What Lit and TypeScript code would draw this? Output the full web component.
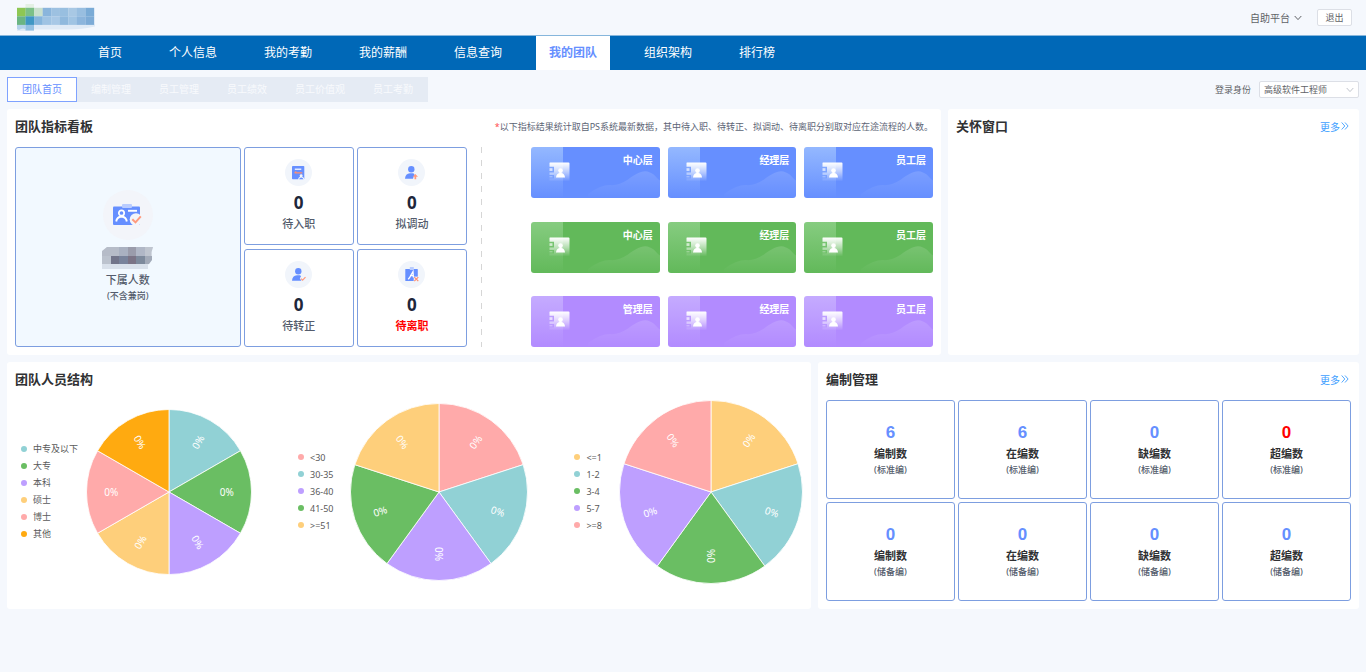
import { LitElement, html, css, svg, nothing } from "lit";
import { customElement, property } from "lit/decorators.js";
import { classMap } from "lit/directives/class-map.js";

const COLORS = {
  teal: "#91d1d5",
  green: "#6abe63",
  purple: "#be9fff",
  yellow: "#fecf7b",
  pink: "#ffaaaa",
  orange: "#ffaa10",
};

interface Slice {
  label: string;
  color: string;
}

interface Chart {
  name: string;
  size: number;
  tight: boolean;
  bottomUp: boolean;
  slices: Slice[];
}

const NAV = ["首页", "个人信息", "我的考勤", "我的薪酬", "信息查询", "我的团队", "组织架构", "排行榜"];
const TABS = ["团队首页", "编制管理", "员工管理", "员工绩效", "员工价值观", "员工考勤"];

const LEVELS = [
  { tone: "blue", names: ["中心层", "经理层", "员工层"] },
  { tone: "green", names: ["中心层", "经理层", "员工层"] },
  { tone: "purple", names: ["管理层", "经理层", "员工层"] },
];

const CHARTS: Chart[] = [
  {
    name: "学历",
    size: 166,
    tight: true,
    bottomUp: false,
    slices: [
      { label: "中专及以下", color: COLORS.teal },
      { label: "大专", color: COLORS.green },
      { label: "本科", color: COLORS.purple },
      { label: "硕士", color: COLORS.yellow },
      { label: "博士", color: COLORS.pink },
      { label: "其他", color: COLORS.orange },
    ],
  },
  {
    name: "年龄",
    size: 178,
    tight: false,
    bottomUp: false,
    slices: [
      { label: "<30", color: COLORS.pink },
      { label: "30-35", color: COLORS.teal },
      { label: "36-40", color: COLORS.purple },
      { label: "41-50", color: COLORS.green },
      { label: ">=51", color: COLORS.yellow },
    ],
  },
  {
    name: "司龄",
    size: 184,
    tight: false,
    bottomUp: true,
    slices: [
      { label: "<=1", color: COLORS.yellow },
      { label: "1-2", color: COLORS.teal },
      { label: "3-4", color: COLORS.green },
      { label: "5-7", color: COLORS.purple },
      { label: ">=8", color: COLORS.pink },
    ],
  },
];

const QUOTAS = [
  { value: 6, label: "编制数", note: "(标准编)" },
  { value: 6, label: "在编数", note: "(标准编)" },
  { value: 0, label: "缺编数", note: "(标准编)" },
  { value: 0, label: "超编数", note: "(标准编)", alert: true },
  { value: 0, label: "编制数", note: "(储备编)" },
  { value: 0, label: "在编数", note: "(储备编)" },
  { value: 0, label: "缺编数", note: "(储备编)" },
  { value: 0, label: "超编数", note: "(储备编)" },
];

const LOGO = [
  ["#8ec753", "#7cc088", "#c9e0cd", "#8ab5dc", "#9dc1e1", "#98bfe0", "#a8c8e4", "#98bee0", "#7aabd6"],
  ["#6bb583", "#3f97c4", "#86b5dc", "#9fc3e3", "#a8c8e6", "#90b9dd", "#a0c4e3", "#8cb5dc", "#7dabd6"],
];

const logo = html`<svg class="logo" width="82" height="27" viewBox="0 0 82 27" role="img" aria-label="logo">
  <rect x="8.5" y="0" width="8.5" height="4" fill="#e3f0e4" />
  <path d="M0 20.500H78v2Q66 25.500 50 25.500H17V27H0z" fill="#dfeaf6" />
  <path d="M0 20.500H8.500V25Q5 23.500 2 26L0 25z" fill="#b3d2ea" />
  <rect x="8.500" y="20.500" width="8.500" height="6" fill="#93c0e2" />
  ${LOGO.map((row, y) =>
    row.map((c, x) => svg`<rect x=${x * 8.56} y=${3.8 + y * 8.5} width="8.700" height="8.600" fill=${c} />`)
  )}
</svg>`;

const chevron = html`<svg class="chevron" width="8" height="6" viewBox="0 0 8 6" aria-hidden="true">
  <path d="M.7 1L4 4.600 7.300 1" fill="none" stroke="currentColor" />
</svg>`;

const moreLink = html`<a class="more" href="#">更多<svg width="8" height="8" viewBox="0 0 8 8" aria-hidden="true">
    <path d="M.7.5L3.800 4 .7 7.500M4 .5L7.100 4 4 7.500" fill="none" stroke="currentColor" stroke-width=".9" />
  </svg></a>`;

const badgeIcon = html`<svg width="29" height="22" viewBox="0 0 29 22" aria-hidden="true">
  <rect x="0" y="2.500" width="27" height="18.500" rx="1" fill="#668fff" />
  <rect x="9" y="0" width="10" height="4" rx="1" fill="#b9ccff" />
  <circle cx="8.500" cy="9" r="2.700" fill="none" stroke="#fff" stroke-width="1.700" />
  <path d="M3.200 17.500Q3.800 13 8.500 12.500 13.200 13 13.800 17.500" fill="none" stroke="#fff" stroke-width="1.900" />
  <path d="M15 6.800h9" stroke="#fff" stroke-width="1.900" />
  <circle cx="23" cy="15.500" r="6.300" fill="#f3f5fa" />
  <path d="M19.300 15.200l3.200 3.200 5.300-6" fill="none" stroke="#ff9a7d" stroke-width="2" />
</svg>`;

const formIcon = html`<svg width="13" height="14" viewBox="0 0 13 14" aria-hidden="true">
  <rect x="0" y="0" width="12.300" height="13.300" rx=".8" fill="#668fff" />
  <path d="M2.800 3.200h6.500" stroke="#fff" stroke-width="1.200" />
  <path d="M2.500 6.900h7.800M2.500 6.900l1.800-1.300" stroke="#ff8f70" stroke-width="1.200" fill="none" />
  <path d="M6 13.700Q6.200 11.300 8 10.800 7 8.300 9.200 8.200 11.300 8.300 10.300 10.800 12.200 11.300 12.600 13.700z" fill="#f2f6fb" />
  <path d="M7.200 13.300Q7.600 11.500 9.200 11.400 11 11.500 11.400 13.300z" fill="#668fff" />
</svg>`;

const personUpIcon = html`<svg width="14" height="14" viewBox="0 0 14 14" aria-hidden="true">
  <circle cx="6.300" cy="3.200" r="3.200" fill="#668fff" />
  <path d="M0 12.800Q.3 7.500 5 7.300H8.200L9.500 8.300 8 12.800z" fill="#668fff" />
  <path d="M10.300 8L13 10.700H11.200V13.300H9.500V10.700H7.700z" fill="#ff9a7d" />
</svg>`;

const personCheckIcon = html`<svg width="14" height="14" viewBox="0 0 14 14" aria-hidden="true">
  <circle cx="6.300" cy="3.200" r="3.200" fill="#668fff" />
  <path d="M0 12.800Q.3 7.500 5 7.300H8.200L9 8.600 7.800 10.300 9.400 12.800z" fill="#668fff" />
  <path d="M9 10.600l1.600 1.600 2.900-3" fill="none" stroke="#ff9a7d" stroke-width="1.200" />
</svg>`;

const leaveIcon = html`<svg width="14" height="15" viewBox="0 0 14 15" aria-hidden="true">
  <rect x=".3" y="2" width="12.500" height="12" rx=".6" fill="#668fff" />
  <rect x="4.800" y="0" width="4" height="3" fill="#b9ccff" />
  <path d="M3.200 12.200Q5 10.500 6.300 7.500L8 4.700 8.400 10.500M5 8.600h3.500" fill="none" stroke="#fff" stroke-width="1.300" />
  <rect x="8.700" y="9.600" width="5.300" height="5.400" fill="#f2f6fb" />
  <path d="M9.300 10.200l4 4M13.300 10.200l-4 4" stroke="#ff8f70" stroke-width="1.200" />
</svg>`;

const headcountBlur = html`<svg width="51" height="23" viewBox="0 0 51 23" role="img" aria-label="下属人数">
  <path d="M5 0H51L49.500 5V13L46 18V22H0V5z" fill="#d9e1eb" />
  <path d="M5 0H17V9H0V4z" fill="#b6bcc8" />
  <path d="M17 0H26V9H17z" fill="#a9b1c1" />
  <path d="M26 0H34V9H26z" fill="#9a9cab" />
  <path d="M34 0H43V9H34z" fill="#b0b7c6" />
  <path d="M43 0H51L49.500 5V9H43z" fill="#bfc5cf" />
  <path d="M0 9H9V17H0z" fill="#bcc3ce" />
  <path d="M9 9H17V17H9z" fill="#72758a" />
  <path d="M17 9H26V17H17z" fill="#78839b" />
  <path d="M26 9H34V17H26z" fill="#7b7486" />
  <path d="M34 9H43V17H34z" fill="#7d8a9c" />
  <path d="M43 9H50V13L47 17H43z" fill="#a2aab8" />
</svg>`;

const METRICS = [
  { icon: formIcon, value: 0, label: "待入职" },
  { icon: personUpIcon, value: 0, label: "拟调动" },
  { icon: personCheckIcon, value: 0, label: "待转正" },
  { icon: leaveIcon, value: 0, label: "待离职", alert: true },
];

@customElement("level-tile")
class LevelTile extends LitElement {
  @property() name = "";
  @property({ reflect: true }) tone = "blue";

  static styles = css`
    :host {
      --base: #668fff;
      --tint: #94b8ff;
      position: relative;
      box-sizing: border-box;
      display: flex;
      justify-content: space-between;
      align-items: flex-start;
      height: 51px;
      padding: 0 7px 0 18px;
      border-radius: 3px;
      overflow: hidden;
      background: linear-gradient(var(--tint), var(--base)) 0 0 / 32px 100% no-repeat var(--base);
    }
    :host([tone="green"]) {
      --base: #62b95a;
      --tint: #86cc80;
    }
    :host([tone="purple"]) {
      --base: #b28bff;
      --tint: #c5abff;
    }
    .book {
      margin-top: 15px;
    }
    .name {
      margin-top: 5px;
      color: #fff;
      font-size: 10px;
      font-weight: 700;
      line-height: 16px;
    }
    .wave {
      position: absolute;
      right: 0;
      bottom: 0;
    }
  `;

  render() {
    return html`
      <svg class="book" width="21" height="20" viewBox="0 0 21 20" aria-hidden="true">
        <defs>
          <linearGradient id="fade" x1="0" y1="0" x2="0" y2="1">
            <stop offset="0" stop-color="#fff" />
            <stop offset=".55" stop-color="#fff" stop-opacity=".5" />
            <stop offset="1" stop-color="#fff" stop-opacity="0" />
          </linearGradient>
        </defs>
        <path
          d="M1 .5H19.500Q20.500.5 20.500 1.500V19.500H.5V16.500H5V13H.5V10.500H5V4.800H.5V1Q.5.5 1 .5zM.5 6.200H3.500V9H.5zM.5 14H3.500V15.600H.5z"
          fill="url(#fade)"
        />
        <circle cx="11.500" cy="8.600" r="2.300" fill="#fff" />
        <path d="M7 15.500Q7.300 11.500 10.500 11V10H12.500V11Q15.700 11.500 16 15.500z" fill="#fff" />
      </svg>
      <svg class="wave" width="72" height="28" viewBox="0 0 72 28" aria-hidden="true">
        <defs>
          <linearGradient id="hill" x1="0" y1="0" x2="0" y2="1">
            <stop offset="0" stop-color="#fff" stop-opacity=".14" />
            <stop offset="1" stop-color="#fff" stop-opacity="0" />
          </linearGradient>
        </defs>
        <path d="M0 24Q12 15 22 15 30 16 40 9.500C48 4 55-1 62 2.500 68 5 69 9 72 10.500V28H0z" fill="url(#hill)" />
      </svg>
      <span class="name">${this.name}</span>
    `;
  }
}

@customElement("pie-chart")
class PieChart extends LitElement {
  @property({ attribute: false }) chart!: Chart;

  static styles = css`
    :host {
      display: flex;
      align-items: center;
    }
    .legend {
      margin: 0 17px 2px 0;
      padding: 0;
      list-style: none;
    }
    .legend.tight {
      margin-right: 8px;
    }
    .entry {
      display: flex;
      align-items: center;
      gap: 6px;
      color: #5a5a5a;
      font-size: 9px;
      line-height: 17px;
      white-space: nowrap;
    }
    .dot {
      width: 6px;
      height: 6px;
      border-radius: 50%;
    }
    .pie {
      display: block;
    }
    .percent {
      fill: #fff;
      font-size: 10px;
      text-anchor: middle;
      dominant-baseline: central;
    }
  `;

  private slice(s: Slice, i: number) {
    const { size, slices, bottomUp } = this.chart;
    const c = size / 2;
    const r = c - 0.5;
    const step = 360 / slices.length;
    const at = (deg: number, rad: number) => {
      const a = (deg * Math.PI) / 180;
      return [c + rad * Math.sin(a), c - rad * Math.cos(a)].map((n) => n.toFixed(2)).join(" ");
    };
    const mid = step * (i + 0.5);
    const turn = mid === 180 ? (bottomUp ? -90 : 90) : mid + (mid > 180 ? 90 : -90);
    return svg`
      <path
        d=${`M${c} ${c}L${at(step * i, r)}A${r} ${r} 0 0 1 ${at(step * (i + 1), r)}z`}
        fill=${s.color} stroke="#fff" stroke-opacity=".8" stroke-linejoin="round" />
      <text class="percent" transform=${`translate(${at(mid, r * 0.7)}) rotate(${turn})`}>0%</text>
    `;
  }

  render() {
    const { name, size, tight, slices } = this.chart;
    return html`
      <ul class=${classMap({ legend: true, tight })}>
        ${slices.map(
          (s) => html`<li class="entry"><span class="dot" style=${`background:${s.color}`}></span>${s.label}</li>`
        )}
      </ul>
      <svg class="pie" width=${size} height=${size} viewBox=${`0 0 ${size} ${size}`} role="img" aria-label=${name}>
        ${slices.map((s, i) => this.slice(s, i))}
      </svg>
    `;
  }
}

@customElement("app-root")
class AppRoot extends LitElement {
  static styles = css`
    :host {
      display: block;
      min-height: 100vh;
      background: #f5f8fd;
      color: #303133;
      font-family: "Noto Sans", "Noto Sans CJK SC", sans-serif;
      font-size: 10px;
    }
    * {
      box-sizing: border-box;
    }
    a {
      color: inherit;
      text-decoration: none;
    }
    svg {
      flex: none;
    }
    .top {
      display: flex;
      justify-content: space-between;
      align-items: center;
      height: 35px;
      padding: 0 14px 0 17px;
      color: #606266;
    }
    .account {
      display: flex;
      align-items: center;
      gap: 15px;
    }
    .platform {
      display: flex;
      align-items: center;
      gap: 4px;
      padding: 0;
      border: 0;
      background: none;
      color: inherit;
      font: inherit;
    }
    .logout {
      width: 35px;
      height: 17px;
      padding: 0;
      border: 1px solid #dcdfe6;
      border-radius: 2px;
      background: #fff;
      color: #606266;
      font: inherit;
      font-size: 9px;
      line-height: 14px;
    }
    .nav {
      display: flex;
      gap: 21px;
      padding-left: 85px;
      border-top: 1px solid #86b6dc;
      background: #0068b7;
      color: #fff;
      font-size: 12px;
      line-height: 33px;
    }
    .nav-item {
      height: 34px;
      padding: 0 13px;
      white-space: nowrap;
    }
    .nav-item.active {
      background: #fff;
      color: #668fff;
      font-weight: 700;
    }
    .sub {
      display: flex;
      justify-content: space-between;
      align-items: center;
      padding: 7px;
    }
    .tabs {
      display: flex;
      padding-right: 1px;
      background: #e5ebf4;
      color: #f8fafd;
      line-height: 25px;
    }
    .tab {
      height: 25px;
      padding: 0 14px;
      line-height: 24px;
      white-space: nowrap;
    }
    .tab.active {
      border: 1px solid #7fa2ff;
      background: #fff;
      color: #668fff;
      line-height: 22px;
    }
    .identity {
      display: flex;
      align-items: center;
      gap: 8px;
      color: #606266;
      font-size: 9px;
    }
    .picker {
      position: relative;
      display: flex;
    }
    .picker .chevron {
      position: absolute;
      right: 5px;
      top: 6px;
      color: #c0c4cc;
      pointer-events: none;
    }
    .select {
      appearance: none;
      width: 100px;
      height: 17px;
      padding: 0 4px;
      border: 1px solid #dcdfe6;
      border-radius: 2px;
      background: #fff;
      color: #606266;
      font: inherit;
    }
    .page {
      display: grid;
      gap: 7px;
      padding: 0 7px 7px;
    }
    .row {
      display: grid;
      gap: 7px;
    }
    .row.overview {
      grid-template-columns: 25fr 11fr;
    }
    .row.detail {
      grid-template-columns: 52fr 35fr;
    }
    .card {
      display: flex;
      flex-direction: column;
      padding: 0 8px 8px;
      border-radius: 3px;
      background: #fff;
    }
    .head {
      display: flex;
      justify-content: space-between;
      align-items: center;
      height: 34px;
      margin-bottom: 4px;
    }
    .title {
      margin: 0;
      font-size: 13px;
      font-weight: 700;
      line-height: 18px;
    }
    .hint {
      margin: 0;
      color: #5c6475;
      font-size: 9px;
      white-space: nowrap;
    }
    .star {
      color: #ff4d4f;
    }
    .more {
      display: flex;
      align-items: center;
      gap: 1px;
      padding-right: 2px;
      color: #409eff;
    }
    .board {
      display: grid;
      grid-template-columns: 9fr auto 8fr;
    }
    .metrics {
      display: grid;
      grid-template-columns: 45fr 22fr 22fr;
      grid-auto-rows: 98px;
      gap: 4px 3px;
    }
    .tile {
      display: flex;
      flex-direction: column;
      align-items: center;
      border: 1px solid #7d9ee0;
      border-radius: 3px;
      background: #fff;
      color: #545c6c;
    }
    .total {
      grid-row: span 2;
      justify-content: center;
      background: #f2f9ff;
    }
    .disc {
      display: flex;
      justify-content: center;
      align-items: center;
      width: 27px;
      height: 27px;
      border-radius: 50%;
      background: #f1f5fb;
    }
    .total .disc {
      width: 50px;
      height: 50px;
      margin-bottom: 7px;
      background: #f3f5fa;
    }
    .total .note {
      margin-bottom: 2px;
    }
    .metric {
      padding-top: 11px;
    }
    .value {
      color: #20263a;
      font-size: 17px;
      font-weight: 700;
      line-height: 22px;
    }
    .metric .value {
      margin-top: 6px;
    }
    .label {
      font-size: 11px;
      font-weight: 500;
      line-height: 20px;
    }
    .note {
      font-size: 9px;
      font-weight: 500;
      line-height: 12px;
    }
    .label.alert {
      color: #ff0000;
      font-weight: 700;
    }
    .divider {
      width: 1px;
      margin: 0 49px 0 14px;
      background: repeating-linear-gradient(#d6d6d6 0 6px, transparent 6px 13px);
    }
    .levels {
      display: grid;
      grid-template-columns: repeat(3, 1fr);
      align-content: space-between;
      gap: 8px;
    }
    .charts {
      display: flex;
      flex: 1;
      justify-content: space-between;
      align-items: center;
      padding: 0 0 17px 6px;
    }
    .quotas {
      display: grid;
      grid-template-columns: repeat(4, 1fr);
      grid-auto-rows: 99px;
      gap: 3px;
    }
    .quota {
      padding-top: 21px;
    }
    .quota .value {
      color: #668fff;
      font-family: "Liberation Sans", sans-serif;
    }
    .quota .value.alert {
      color: #ff0000;
    }
    .quota .label {
      color: #303133;
      font-weight: 700;
    }
  `;

  private head(title: string, extra: unknown = nothing) {
    return html`<div class="head"><h2 class="title">${title}</h2>${extra}</div>`;
  }

  render() {
    return html`
      <header class="top">
        ${logo}
        <div class="account">
          <button class="platform" type="button">自助平台${chevron}</button>
          <button class="logout" type="button">退出</button>
        </div>
      </header>
      <nav class="nav">
        ${NAV.map((n) => html`<a href="#" class=${classMap({ "nav-item": true, active: n === "我的团队" })}>${n}</a>`)}
      </nav>
      <div class="sub">
        <nav class="tabs">
          ${TABS.map((t, i) => html`<a href="#" class=${classMap({ tab: true, active: i === 0 })}>${t}</a>`)}
        </nav>
        <div class="identity">
          <label for="identity">登录身份</label>
          <div class="picker">
            <select class="select" id="identity"><option>高级软件工程师</option></select>
            ${chevron}
          </div>
        </div>
      </div>
      <main class="page">
        <div class="row overview">
          <section class="card">
            ${this.head(
              "团队指标看板",
              html`<p class="hint"><span class="star">*</span>以下指标结果统计取自PS系统最新数据，其中待入职、待转正、拟调动、待离职分别取对应在途流程的人数。</p>`
            )}
            <div class="board">
              <div class="metrics">
                <div class="tile total">
                  <div class="disc">${badgeIcon}</div>
                  ${headcountBlur}
                  <div class="label">下属人数</div>
                  <div class="note">(不含兼岗)</div>
                </div>
                ${METRICS.map(
                  (m) => html`<div class="tile metric">
                    <div class="disc">${m.icon}</div>
                    <div class="value">${m.value}</div>
                    <div class=${classMap({ label: true, alert: !!m.alert })}>${m.label}</div>
                  </div>`
                )}
              </div>
              <div class="divider"></div>
              <div class="levels">
                ${LEVELS.map((l) => l.names.map((n) => html`<level-tile tone=${l.tone} name=${n}></level-tile>`))}
              </div>
            </div>
          </section>
          <section class="card">${this.head("关怀窗口", moreLink)}</section>
        </div>
        <div class="row detail">
          <section class="card">
            ${this.head("团队人员结构")}
            <div class="charts">${CHARTS.map((c) => html`<pie-chart .chart=${c}></pie-chart>`)}</div>
          </section>
          <section class="card">
            ${this.head("编制管理", moreLink)}
            <div class="quotas">
              ${QUOTAS.map(
                (q) => html`<div class="tile quota">
                  <div class=${classMap({ value: true, alert: !!q.alert })}>${q.value}</div>
                  <div class="label">${q.label}</div>
                  <div class="note">${q.note}</div>
                </div>`
              )}
            </div>
          </section>
        </div>
      </main>
    `;
  }
}
